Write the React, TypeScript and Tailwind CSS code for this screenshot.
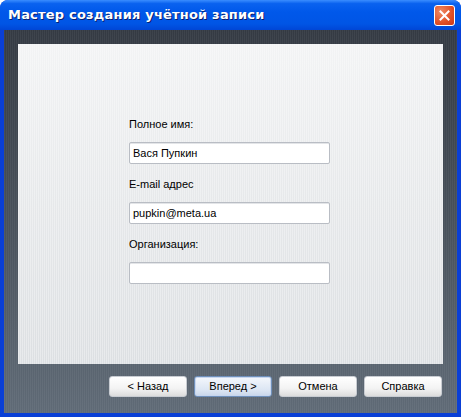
import React from "react";

const font = { fontFamily: "Tahoma, 'Liberation Sans', Arial, sans-serif" };

const Field = ({ label, value }: { label: string; value: string }) => (
  <div className="flex flex-col">
    <span className="h-[18px] text-[11px] leading-[18px] text-black">{label}</span>
    <div className="mt-[9px] flex h-[22px] w-[201px] items-center rounded-[2px] border border-[#b9bdc4] bg-white px-[3px] text-[11px] text-black shadow-[inset_0_1px_0_#e3e5e8]">
      {value}
    </div>
  </div>
);

const WizButton = ({ children, primary }: { children: React.ReactNode; primary?: boolean }) => (
  <button
    className={
      "flex h-[21px] w-[78px] items-center justify-center rounded-[3px] border text-[11px] text-black " +
      (primary
        ? "border-[#6f90bb] bg-[linear-gradient(#f4f7fc,#dbe5f3_70%,#c9d6ea)] shadow-[inset_0_0_0_1px_#c7d6ee]"
        : "border-[#c8ccd2] bg-[linear-gradient(#ffffff,#f3f3f3_60%,#dcdcdc)]")
    }
  >
    {children}
  </button>
);

export default function App() {
  return (
    <div className="flex h-[417px] w-[461px] flex-col overflow-hidden rounded-t-[8px] bg-[#0a3fd6]" style={font}>
      {/* title bar */}
      <div className="flex h-[30px] shrink-0 items-center justify-between bg-[linear-gradient(#3a8dff_0,#0a62ef_12%,#0058ea_40%,#0055e5_80%,#0046d6_100%)] pl-[8px] pr-[6px]">
        <span className="text-[13px] font-bold tracking-[0.2px] text-white [text-shadow:1px_1px_0_#0a1f6e]" style={{ fontFamily: "'Trebuchet MS', 'DejaVu Sans', sans-serif" }}>
          Мастер создания учётной записи
        </span>
        <div className="flex h-[21px] w-[21px] items-center justify-center rounded-[3px] border border-white bg-[radial-gradient(circle_at_30%_30%,#f08a63,#e04f26_60%,#c8381a)]">
          <svg width="11" height="11" viewBox="0 0 11 11">
            <path d="M1.5 1.5 L9.5 9.5 M9.5 1.5 L1.5 9.5" stroke="white" strokeWidth="2" strokeLinecap="square" />
          </svg>
        </div>
      </div>

      {/* frame body */}
      <div className="flex flex-1 flex-col px-[4px] pb-[4px]">
        <div className="flex flex-1 flex-col bg-[image:repeating-linear-gradient(90deg,rgba(255,255,255,0.05)_0_1px,transparent_1px_2px),linear-gradient(#343a43,#4a535d_55%,#5f6a76)] px-[14px] pt-[14px] pb-[16px]">
          {/* content panel */}
          <div className="flex h-[320px] flex-col bg-[image:repeating-linear-gradient(90deg,rgba(255,255,255,0.35)_0_1px,transparent_1px_2px),linear-gradient(#f2f3f4,#e6e8ea_50%,#dcdfe2)] pl-[111px] pt-[71px]">
            <div className="flex flex-col gap-[11px]">
              <Field label="Полное имя:" value="Вася Пупкин" />
              <Field label="E-mail адрес" value="pupkin@meta.ua" />
              <Field label="Организация:" value="" />
            </div>
          </div>

          {/* wizard buttons */}
          <div className="mt-[12px] flex justify-end gap-[7px] pr-[1px]">
            <WizButton>&lt; Назад</WizButton>
            <WizButton primary>Вперед &gt;</WizButton>
            <WizButton>Отмена</WizButton>
            <WizButton>Справка</WizButton>
          </div>
        </div>
      </div>
    </div>
  );
}
